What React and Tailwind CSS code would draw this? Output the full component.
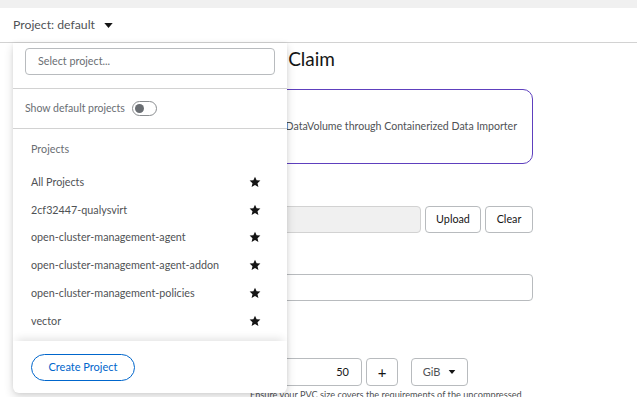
const projects = [
  "All Projects",
  "2cf32447-qualysvirt",
  "open-cluster-management-agent",
  "open-cluster-management-agent-addon",
  "open-cluster-management-policies",
  "vector",
];

const Caret = ({ className = "" }) => (
  <svg viewBox="0 0 10 6" className={className} fill="currentColor">
    <path d="M0 0h10L5 6z" />
  </svg>
);

const Star = () => (
  <svg viewBox="0 0 24 24" className="w-[12px] h-[12px] text-[#151515]" fill="currentColor">
    <path d="M12 1.5l3.2 7 7.6.7-5.8 5.1 1.8 7.5L12 17.8l-6.8 4 1.8-7.5L1.2 9.2l7.6-.7z" />
  </svg>
);

const ProjectDropdown = () => (
  <div className="absolute left-[13px] top-[43px] w-[274px] bg-white rounded-b-md shadow-[0_4px_10px_rgba(3,3,3,0.16),0_0_4px_rgba(3,3,3,0.06)] z-10">
    <div className="px-3 pt-[5px] pb-[13px] border-b border-[#d2d2d2]">
      <div className="h-[27px] border border-[#b8bbbe] rounded-[4px] flex items-center px-3 text-[10.75px] text-[#6a6e73]">
        Select project...
      </div>
    </div>
    <div className="h-[40px] flex items-center px-3 gap-[7px] border-b border-[#d2d2d2] text-[10.5px] text-[#6a6e73]">
      <span>Show default projects</span>
      <div className="w-[25px] h-[15px] rounded-full border border-[#8a8d90] flex items-center px-[2px]">
        <div className="w-[9px] h-[9px] rounded-full bg-[#6a6e73]" />
      </div>
    </div>
    <div className="pt-[11px] pb-[6px]">
      <div className="px-[18px] h-[18px] flex items-center text-[10.75px] text-[#6a6e73]">Projects</div>
      <ul className="mt-[10px]">
        {projects.map((p) => (
          <li key={p} className="h-[27.8px] flex items-center justify-between pl-[18px] pr-[26px] text-[10.75px] text-[#4f5255] whitespace-nowrap">
            <span>{p}</span>
            <Star />
          </li>
        ))}
      </ul>
    </div>
    <div className="pt-[12px] pb-[12px] px-[18px] rounded-b-md shadow-[0_-6px_8px_-4px_rgba(3,3,3,0.12)]">
      <button className="h-[27px] w-[104px] rounded-full border border-[#0066cc] text-[11px] text-[#0066cc]">
        Create Project
      </button>
    </div>
  </div>
);

export default function App() {
  return (
    <div
      className="relative w-[637px] h-[397px] overflow-hidden bg-white"
      style={{ fontFamily: 'Lato, "Liberation Sans", sans-serif' }}
    >
      <div className="h-[8px] bg-[#f0f0f0]" />
      <div className="h-[35px] border-b border-[#d2d2d2] flex items-center px-[13px] gap-[9px] text-[12.25px] text-[#4f5255]">
        <span>Project: default</span>
        <Caret className="w-[9px] h-[5px] text-[#151515]" />
      </div>

      <div className="ml-[24px] w-[509px]">
        <div className="w-[311px] h-[32px] flex items-center justify-end overflow-hidden whitespace-nowrap">
          <h1 className="text-[19px] text-[#151515]">Upload data to Persistent Volume Claim</h1>
        </div>
        <div className="mt-[14px] h-[75px] border border-[#5e40be] rounded-[10px] overflow-hidden flex items-center justify-end pr-[15px] whitespace-nowrap text-[10.6px] text-[#4f5255]">
          Import data from a source into a DataVolume through Containerized Data Importer
        </div>
        <div className="mt-[20px] h-[18px] text-[11px] text-[#151515]">Source</div>
        <div className="mt-[4px] flex gap-[4px] h-[27px]">
          <div className="flex-1 bg-[#f0f0f0] border border-[#d2d2d2] rounded-[4px]" />
          <button className="w-[56px] border border-[#b8bbbe] rounded-[4px] text-[10.75px] text-[#151515]">Upload</button>
          <button className="w-[48px] border border-[#b8bbbe] rounded-[4px] text-[10.75px] text-[#151515]">Clear</button>
        </div>
        <div className="mt-[23px] h-[18px] text-[11px] text-[#151515]">Persistent Volume Claim name</div>
        <div className="h-[27px] border border-[#b8bbbe] rounded-[4px]" />
        <div className="mt-[39px] h-[18px] text-[11px] text-[#151515]">Size</div>
        <div className="flex items-center h-[28px]">
          <div className="w-[338px] h-full border border-[#b8bbbe] rounded-[4px] flex items-center justify-end pr-[12px] text-[11px] text-[#151515]">
            50
          </div>
          <button className="ml-[4px] w-[32px] h-full border border-[#b8bbbe] rounded-[4px] flex items-center justify-center text-[15px] text-[#151515]">
            +
          </button>
          <button className="ml-[13px] w-[57px] h-full border border-[#b8bbbe] rounded-[4px] flex items-center justify-center gap-[8px] text-[11px] text-[#4f5255]">
            GiB
            <Caret className="w-[8px] h-[4px] text-[#151515]" />
          </button>
        </div>
        <div className="mt-[2px] ml-[226px] whitespace-nowrap text-[9.2px] leading-[14px] text-[#4f5255]">
          Ensure your PVC size covers the requirements of the uncompressed
        </div>
      </div>

      <ProjectDropdown />
    </div>
  );
}
